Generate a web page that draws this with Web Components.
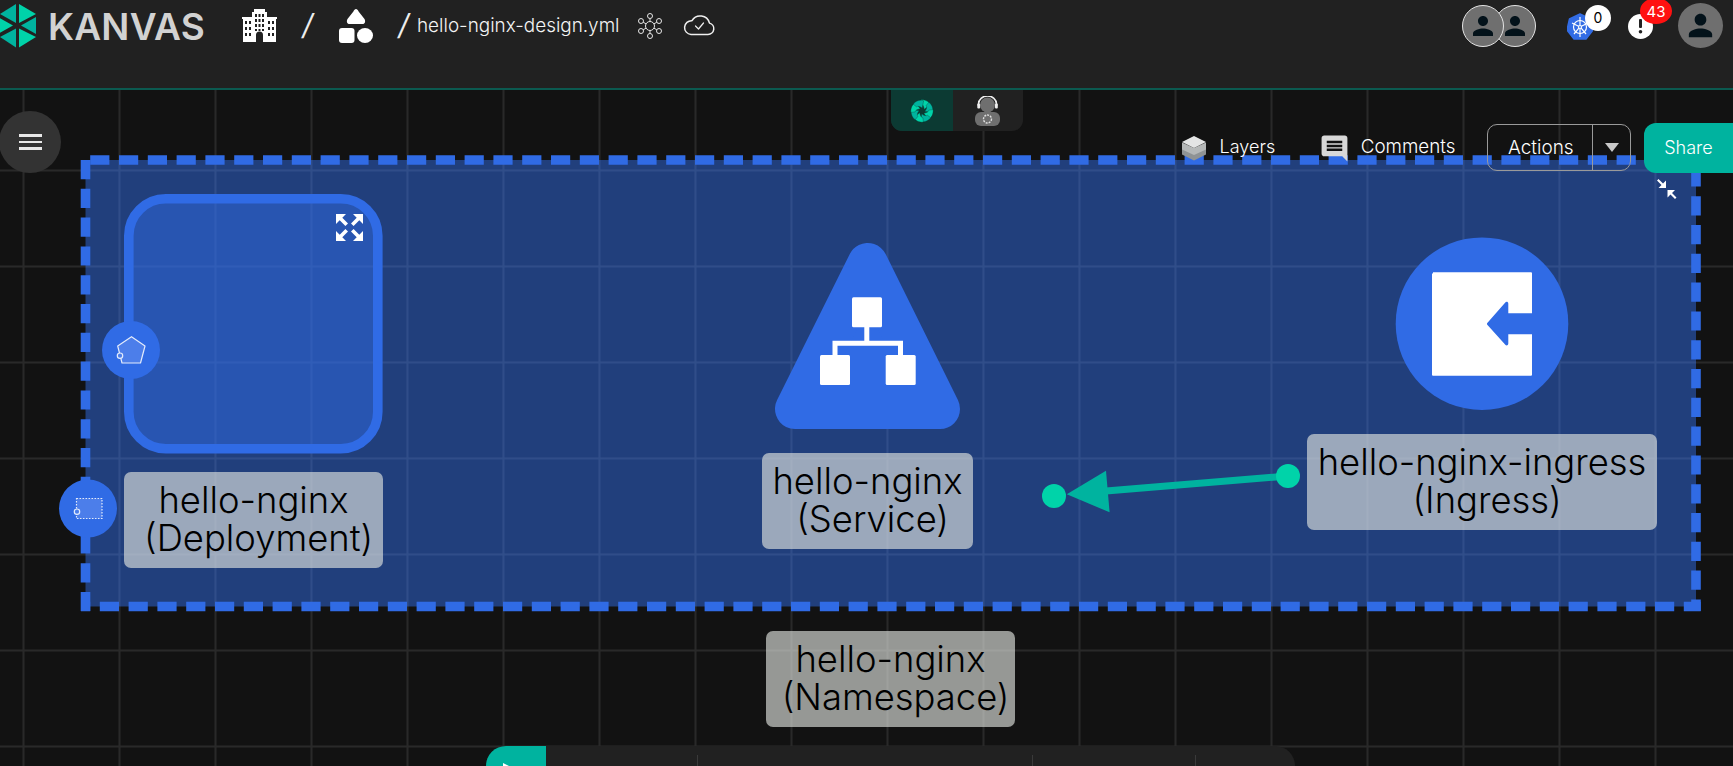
<!DOCTYPE html>
<html lang="en">
<head>
<meta charset="utf-8">
<title>Kanvas</title>
<style>
html,body{margin:0;height:100%;overflow:hidden;background:#121212}
body{display:flex;flex-direction:column;font-family:Inter,"Open Sans",sans-serif;color:#fff}
</style>
</head>
<body>
<k-header></k-header>
<k-canvas>
<k-diagram></k-diagram>
<k-label style="left:124px;top:382px;width:259px">hello-nginx
 (Deployment)</k-label>
<k-label style="left:762px;top:363px;width:211px">hello-nginx
 (Service)</k-label>
<k-label style="left:1307px;top:344px;width:350px">hello-nginx-ingress
 (Ingress)</k-label>
<k-label style="left:766px;top:541px;width:249px">hello-nginx
 (Namespace)</k-label>
<k-menu-button></k-menu-button>
<k-view-switch></k-view-switch>
<k-action-bar></k-action-bar>
<k-dock></k-dock>
</k-canvas>
<script>
class Base extends HTMLElement{
  constructor(){super();this.attachShadow({mode:'open'}).innerHTML=this.constructor.markup;}
}
const person='M12 12c2.21 0 4-1.79 4-4s-1.79-4-4-4-4 1.79-4 4 1.79 4 4 4zm0 2c-2.67 0-8 1.34-8 4v2h16v-2c0-2.66-5.33-4-8-4z';

class KAvatar extends Base{
  static markup=`<style>
  :host{display:flex;align-items:center;justify-content:center;box-sizing:border-box;width:var(--size,42px);height:var(--size,42px);border-radius:50%;background:#6f6f6f;border:var(--ring,1px solid #e4e4e4)}
  svg{width:var(--icon,30px);height:var(--icon,30px);fill:#03121a;display:block}
  </style><svg viewBox="0 0 24 24"><path d="${person}"/></svg>`;
}
customElements.define('k-avatar',KAvatar);

class KHeader extends Base{
  static markup=`<style>
  :host{display:flex;flex:none;box-sizing:border-box;height:90px;background:#212121;border-bottom:2px solid #0b5a50;align-items:flex-start;position:relative;z-index:2}
  svg{display:block;flex:none}
  .brand{font:600 37px/44px Inter,sans-serif;color:#d2d2d2;margin:5px 0 0 12px;width:157px;white-space:nowrap;letter-spacing:.2px}
  .slash{font:400 29px/44px Inter,sans-serif;color:#ededed;flex:none;width:14px;text-align:center;transform:skewX(-10deg)}
  .file{font:300 18.900px/26px Inter,sans-serif;color:#f4f4f4;margin:13px 0 0 6px;width:201px;white-space:nowrap}
  .right{margin-left:auto;display:flex;align-items:flex-start;padding-right:10px}
  .badged{position:relative;flex:none}
  .badge{position:absolute;display:flex;align-items:center;justify-content:center;border-radius:50%;font:400 14px/1 Inter,sans-serif}
  .zero{left:18px;top:-7px;width:26px;height:26px;background:#fff;color:#000}
  .count{left:12px;top:-16px;width:32px;height:26px;background:#f11;color:#fff;font-size:15px}
  .alert{width:25px;height:25px;border-radius:50%;background:#fff;display:flex;align-items:center;justify-content:center}
  </style>
  <svg width="36" height="44" viewBox="0 0 36 44" style="margin-top:4px">
    <polygon points="16,0 16,19 0,10" fill="#00b39f"/><polygon points="19,0 19,19 36,10" fill="#00d3a9"/>
    <polygon points="-2,13 13,21.5 -2,30" fill="#00d3a9"/><polygon points="36,13 21,21.5 36,30" fill="#00b39f"/>
    <polygon points="16,43.5 16,24.5 0,33" fill="#00b39f"/><polygon points="19,43.5 19,24.5 36,33" fill="#00d3a9"/>
  </svg>
  <span class="brand">KANVAS</span>
  <svg width="35" height="33" viewBox="0 0 35 33" style="margin:9px 0 0 37px" fill="#fff">
    <path fill-rule="evenodd" d="M12 0h11v3h2v5h10v2h-1v23H21v-7a3.5 3.5 0 0 0-7 0v7H1V10H0V8h10V3h2zM13 5v3h2V5zm3.5 0v3h2V5zM20 5v3h2V5zM13 10v3h2v-3zm3.5 0v3h2v-3zm3.5 0v3h2v-3zM13 15v3h2v-3zm3.5 0v3h2v-3zm3.5 0v3h2v-3zM13 20v2h2v-2zm3.5 0v2h2v-2zm3.5 0v2h2v-2zM3 12v3h2v-3zm4 0v3h2v-3zM3 18v3h2v-3zm4 0v3h2v-3zM3 24v3h2v-3zm4 0v3h2v-3zM26 12v3h2v-3zm4 0v3h2v-3zM26 18v3h2v-3zm4 0v3h2v-3zM26 24v3h2v-3zm4 0v3h2v-3z"/>
  </svg>
  <span class="slash" style="margin:3px 0 0 24px">/</span>
  <svg width="34" height="34" viewBox="0 0 34 34" style="margin:9px 0 0 24px" fill="#fff">
    <path d="M17 0c1 0 2 1 2.600 2.500L25.500 10c1.500 3 0 5-2 5H10.500c-2 0-3.500-2-2-5L14.400 2.500C15 1 16 0 17 0z"/>
    <rect x="0" y="19" width="15.500" height="15" rx="3"/><ellipse cx="26" cy="26.500" rx="8" ry="7.500"/>
  </svg>
  <span class="slash" style="margin:3px 0 0 24px">/</span>
  <span class="file">hello-nginx-design.yml</span>
  <svg width="24" height="26" viewBox="0 0 24 26" style="margin:13px 0 0 20px" fill="none" stroke="#e6e6e6" stroke-width="1">
    <circle cx="12" cy="13" r="4.500"/><circle cx="12" cy="3" r="2.500"/><circle cx="12" cy="23" r="2.500"/>
    <circle cx="3" cy="8" r="2.500"/><circle cx="21" cy="8" r="2.500"/><circle cx="3" cy="18" r="2.500"/><circle cx="21" cy="18" r="2.500"/>
    <path d="M12 5.500v3M12 17.500v3M5.200 9.200l3 1.800M18.800 9.200l-3 1.800M5.200 16.800l3-1.800M18.800 16.800l-3-1.800"/>
  </svg>
  <svg width="32" height="22" viewBox="0 0 32 22" style="margin:14px 0 0 21px" fill="none" stroke="#f0f0f0" stroke-width="1.500" stroke-linejoin="round" stroke-linecap="round">
    <path d="M8 20.500h17a5.800 5.800 0 0 0 1.500-11.400A9.600 9.600 0 0 0 9 6.700 6.900 6.900 0 0 0 8 20.500z"/><path d="M12.500 12l3 3 5-6" stroke-width="1.200"/>
  </svg>
  <div class="right">
    <k-avatar style="margin-top:5px;position:relative;z-index:1"></k-avatar>
    <k-avatar style="margin:5px 0 0 -10px"></k-avatar>
    <div class="badged" style="margin:12px 0 0 31px;width:26px;height:28px">
      <svg width="26" height="28" viewBox="0 0 26 28">
        <polygon points="13,.5 23.500,5.500 26,16.500 19,25.500 7,25.500 0,16.500 2.500,5.500" transform="translate(0 1.500)" fill="#326ce5" stroke="#326ce5" stroke-width="1.500" stroke-linejoin="round"/>
        <g fill="none" stroke="#fff" stroke-width="1.200"><circle cx="13" cy="15" r="6.500"/><circle cx="13" cy="15" r="1.500"/>
        <path d="M13 5v8.500M13 16.500V25M5 11l6.600 3.200M21 11l-6.600 3.200M7 22l4.800-5.800M19 22l-4.800-5.800"/></g>
      </svg>
      <span class="badge zero">0</span>
    </div>
    <div class="badged" style="margin:14px 0 0 35px;width:25px;height:25px">
      <div class="alert"><svg width="5" height="15" viewBox="0 0 5 15" fill="#222"><rect x="1" y="0" width="3" height="9" rx="1"/><circle cx="2.500" cy="12.800" r="1.800"/></svg></div>
      <span class="badge count">43</span>
    </div>
    <k-avatar style="--size:45px;--icon:35px;--ring:none;margin:3px 0 0 25px"></k-avatar>
  </div>`;
}
customElements.define('k-header',KHeader);

class KCanvas extends Base{
  static markup=`<style>
  :host{display:block;flex:1;position:relative;overflow:hidden;background-color:#121212;
    background-image:linear-gradient(to right,#292929 2px,transparent 2px),linear-gradient(to bottom,#292929 2px,transparent 2px);
    background-size:96px 96px;background-position:22.500px 0,0 79.500px}
  </style><slot></slot>`;
}
customElements.define('k-canvas',KCanvas);

class KLabel extends Base{
  static markup=`<style>
  :host{position:absolute;display:block;box-sizing:border-box;height:96px;padding:9px 0;background:rgba(222,226,221,.647);border-radius:7px;color:#000;
    font:300 36.400px/38.400px Inter,sans-serif;text-align:center;white-space:pre}
  </style><slot></slot>`;
}
customElements.define('k-label',KLabel);

const outward='M0 0h10L6.300 3.700 12 9.400 9.400 12 3.700 6.300 0 10z';
class KDiagram extends Base{
  static markup=`<style>
  :host{position:absolute;inset:0;display:block}
  svg{display:block}
  </style>
  <svg width="1733" height="676" viewBox="0 90 1733 676">
    <defs><pattern id="g" width="96" height="96" patternUnits="userSpaceOnUse" x="22.500" y="169.500"><path d="M0 0h96v1.500H0zM0 1.500h1.500V96H0z" fill="#fff" fill-opacity=".025"/></pattern></defs>
    <rect x="85.500" y="160" width="1610.500" height="446.500" fill="#306be5" fill-opacity=".5"/>
    <rect x="85.500" y="160" width="1610.500" height="446.500" fill="url(#g)"/>
    <g stroke="#306be5" stroke-width="9.600" stroke-dasharray="19.200 9.600" fill="none">
      <line x1="85.500" y1="160" x2="1700" y2="160" stroke-dashoffset="24.100"/>
      <line x1="85.500" y1="160" x2="85.500" y2="611"/>
      <line x1="1696" y1="160" x2="1696" y2="611" stroke-dashoffset="21.400"/>
      <line x1="1700.700" y1="606.500" x2="81" y2="606.500" stroke-dashoffset="2.300"/>
    </g>
    <rect x="128.800" y="198.800" width="249" height="250" rx="37" fill="#306be5" fill-opacity=".5" stroke="#306be5" stroke-width="9.600"/>
    <g fill="#fff" transform="translate(336 214)">
      <path d="${outward}"/>
      <path d="${outward}" transform="translate(27 0) scale(-1 1)"/>
      <path d="${outward}" transform="translate(0 27) scale(1 -1)"/>
      <path d="${outward}" transform="translate(27 27) scale(-1 -1)"/>
    </g>
    <circle cx="131" cy="350" r="29" fill="#306be5"/>
    <polygon points="131.500,336.700 145,346 140.500,363 122,363 117.700,346" fill="#4c7eea" stroke="#e3ebfb" stroke-width="1.200" stroke-linejoin="round"/>
    <circle cx="120" cy="355.700" r="2.700" fill="#4c7eea" stroke="#e3ebfb" stroke-width="1.200"/>
    <circle cx="88" cy="508.500" r="29" fill="#306be5"/>
    <rect x="76.500" y="498.500" width="25.500" height="20" fill="#4c7eea" stroke="#e3ebfb" stroke-width="1.200" stroke-dasharray="1.600 1.400"/>
    <circle cx="77" cy="511.700" r="2.700" fill="#4c7eea" stroke="#e3ebfb" stroke-width="1.200"/>
    <path d="M867.700 263 795 409h145z" fill="#306be5" stroke="#306be5" stroke-width="40" stroke-linejoin="round"/>
    <g fill="#fff">
      <rect x="852" y="297.300" width="30" height="30" rx="1.500"/><rect x="820" y="355" width="30" height="30" rx="1.500"/><rect x="885.700" y="355" width="30" height="30" rx="1.500"/>
      <path d="M864.300 327h5v13.700H903V355h-5v-9.200h-60.500V355h-5v-14.300h31.800z"/>
    </g>
    <circle cx="1482" cy="323.700" r="86.300" fill="#306be5"/>
    <path fill="#fff" d="M1433 272.300h98a1 1 0 0 1 1 1v40h-23.700v-9.500c0-2-2-2.500-3-1.300l-17.800 20.300c-.7.800-.7 1.500 0 2.300l17.800 19.700c1 1.200 3 .7 3-1.300v-9.200H1532v40.400a1 1 0 0 1-1 1h-98a1 1 0 0 1-1-1v-100.400a1 1 0 0 1 1-1z"/>
    <line x1="1288" y1="476" x2="1100" y2="491.500" stroke="#00b39f" stroke-width="7"/>
    <polygon points="1066.800,494.300 1106,470.700 1109.600,512.300" fill="#00b39f"/>
    <circle cx="1054" cy="496" r="12" fill="#00d3a9"/><circle cx="1288" cy="476" r="12" fill="#00d3a9"/>
  </svg>`;
}
customElements.define('k-diagram',KDiagram);

class KMenuButton extends Base{
  static markup=`<style>
  :host{position:absolute;left:-1px;top:21px;width:62px;height:62px;border-radius:50%;background:#333;display:flex;flex-direction:column;gap:4px;align-items:center;justify-content:center}
  i{display:block;width:23px;height:2.500px;background:#e8e8e8}
  </style><i></i><i></i><i></i>`;
}
customElements.define('k-menu-button',KMenuButton);

const blades=[0,45,90,135,180,225,270,315].map((a,i)=>`<path d="M-1.500-12C3-12.500 7.500-10.500 9-6.500L2.200-2C2.400-4.500 1-7-1-7.500z" fill="${i%2?'#00b39f':'#00d3a9'}" stroke="#0c3a33" stroke-width=".35" transform="rotate(${a})"/>`).join('');
class KViewSwitch extends Base{
  static markup=`<style>
  :host{position:absolute;left:891px;top:0;width:132px;height:41px;display:flex;background:#212121;border-radius:0 0 11px 11px;overflow:hidden}
  div{display:flex;align-items:center;justify-content:center}
  .on{width:62px;background:#0c3a33}
  .off{flex:1}
  </style>
  <div class="on"><svg width="24" height="24" viewBox="-13 -13 26 26">${blades}</svg></div>
  <div class="off"><svg width="26" height="30" viewBox="0 0 26 30">
    <circle cx="12.500" cy="9" r="7.500" fill="#6f6f6f"/><rect x="0" y="16" width="25" height="14" rx="6" fill="#6f6f6f"/>
    <path d="M3.500 10V8a9 8 0 0 1 18 0v2" fill="none" stroke="#eee" stroke-width="1.600"/><rect x="2.300" y="7.500" width="2.800" height="5" rx="1" fill="#eee"/><rect x="20" y="7.500" width="2.800" height="5" rx="1" fill="#eee"/>
    <circle cx="12.500" cy="23" r="4" fill="none" stroke="#ddd" stroke-width="1.400" stroke-dasharray="2 1"/>
  </svg></div>`;
}
customElements.define('k-view-switch',KViewSwitch);

class KActionBar extends Base{
  static markup=`<style>
  :host{position:absolute;left:1182px;right:0;top:33px;height:50px;display:flex;align-items:flex-start;font:300 18.400px/24px Inter,sans-serif;color:#fff}
  svg{display:block;flex:none}
  .txt{margin-top:12px;white-space:nowrap}
  .actions{box-sizing:border-box;margin:1px 0 0 32.700px;width:144px;height:47px;border:1px solid #9a9a9a;border-radius:10px;display:flex;align-items:stretch;flex:none}
  .actions span{width:104px;box-sizing:border-box;padding-left:19.500px;line-height:46px;font-size:19px}
  .actions b{flex:1;border-left:1px solid #9a9a9a;display:flex;align-items:center;justify-content:center}
  .share{margin-left:12.500px;flex:1;height:50px;background:#00b39f;border-radius:12px 0 0 12px;display:flex;align-items:center;justify-content:center;color:#fff;font-size:18px}
  </style>
  <svg width="24" height="25" viewBox="0 0 24 25" style="margin-top:13px">
    <path d="M12 15l-12-6v7l12 6 12-6V9z" fill="#8f9394" transform="translate(0 2.500)"/>
    <path d="M12 11L0 5.500v7L12 18l12-5.500v-7z" fill="#b5b8b8" transform="translate(0 1)"/>
    <path d="M12 0L0 6l12 6 12-6z" fill="#e4e5e5"/>
  </svg>
  <span class="txt" style="margin-left:13.600px;width:55px;font-size:18px">Layers</span>
  <svg width="31" height="31" viewBox="0 0 24 24" style="margin:10px 0 0 44.800px" fill="#d8d8d8"><path d="M21.990 4c0-1.100-.890-2-1.990-2H4c-1.100 0-2 .900-2 2v12c0 1.100.900 2 2 2h14l4 4-.010-18zM18 14H6v-2h12v2zm0-3H6V9h12v2zm0-3H6V6h12v2z"/></svg>
  <span class="txt" style="margin-left:10.400px;width:94px;font-size:18.800px">Comments</span>
  <div class="actions"><span>Actions</span><b><svg width="14" height="9" viewBox="0 0 14 9"><path d="M0 0h14L7 9z" fill="#c9c9c9"/></svg></b></div>
  <div class="share">Share</div>
  <svg width="20" height="20" viewBox="0 0 20 20" fill="#fff" style="position:absolute;left:475px;top:56px">
    <path d="M1.500 0L6 4.500 9 1.500V9H1.500L4.500 6 0 1.500z"/><path d="M1.500 0L6 4.500 9 1.500V9H1.500L4.500 6 0 1.500z" transform="translate(19.500 20) rotate(180)"/>
  </svg>`;
}
customElements.define('k-action-bar',KActionBar);

class KDock extends Base{
  static markup=`<style>
  :host{position:absolute;left:486px;bottom:0;width:809px;height:20px;display:flex;background:#212121;border-radius:24px 24px 0 0;overflow:hidden}
  .play{width:60px;background:#00b39f;flex:none;display:flex;padding:17px 0 0 17px;box-sizing:border-box}
  .play svg{display:block}
  .s{box-sizing:border-box;margin-top:9px}
  .b{border-left:1px solid #3a3a3a}
  </style>
  <div class="play"><svg width="18" height="18" viewBox="0 0 18 18"><path d="M0 0l18 9-18 9z" fill="#fff"/></svg></div>
  <div class="s" style="width:151px"></div><div class="s b" style="width:335px"></div><div class="s b" style="width:163px"></div><div class="s b" style="flex:1"></div>`;
}
customElements.define('k-dock',KDock);
</script>
</body>
</html>
